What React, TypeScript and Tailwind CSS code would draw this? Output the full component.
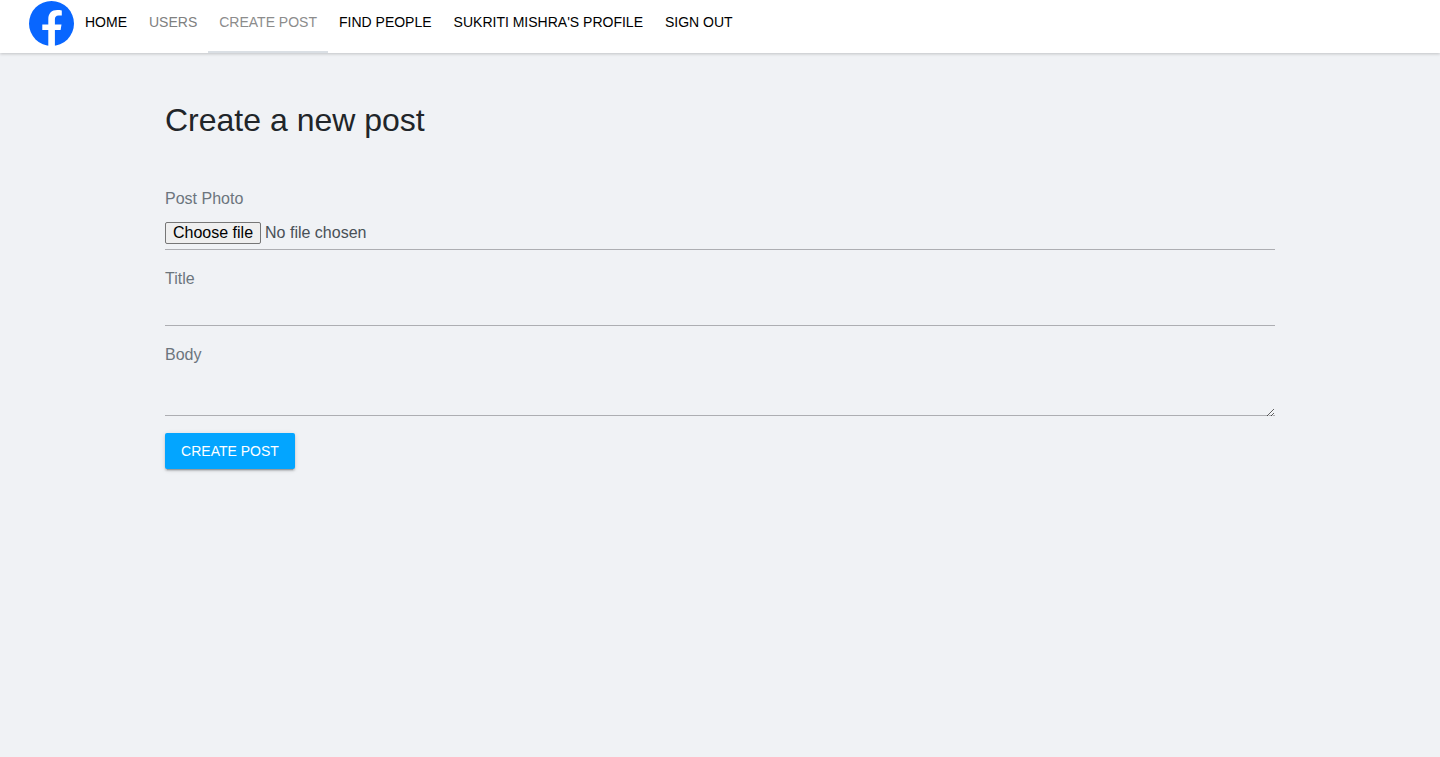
const nav = "flex h-[53px] items-start px-[11px] pt-[13px] text-[14px] leading-[18px]";

export default function App() {
  return (
    <div className="min-h-screen bg-[#f0f2f5] font-['Liberation_Sans',Arial,sans-serif]">
      <header className="flex h-[53px] bg-white pl-[29px] shadow-[0_1px_3px_rgba(0,0,0,0.2)]">
        <svg className="mt-px size-[45px] shrink-0" viewBox="0 0 45 45">
          <circle cx="22.5" cy="22.5" r="22.5" fill="#0866ff" />
          <path fill="#fff" d="M19.3 44.9V29h-6v-5.6h6v-5.2c0-6 3.5-9.2 8.9-9.2 1.7 0 3.2.2 4.6.4v5.1h-3.1c-2.9 0-3.8 1.8-3.8 3.7v5.2h6.6L31.6 29h-5.7v15.9z" />
        </svg>
        <nav className="flex">
          <a className={`${nav} text-black`}>HOME</a>
          <a className={`${nav} text-[#808080]`}>USERS</a>
          <a className={`${nav} border-b-2 border-[#dadfe4] text-[#8c8c8c]`}>CREATE POST</a>
          <a className={`${nav} text-black`}>FIND PEOPLE</a>
          <a className={`${nav} text-black`}>SUKRITI MISHRA'S PROFILE</a>
          <a className={`${nav} text-black`}>SIGN OUT</a>
        </nav>
      </header>
      <main className="mx-auto w-[1110px] pt-12 text-[16px] leading-6 text-[#6c757d]">
        <h2 className="h-[86px] text-[32px] leading-[38px] text-[#212529]">Create a new post</h2>
        <label className="block">Post Photo</label>
        <div className="mt-2 flex h-[31px] items-start gap-1 border-b border-[#adaeb2] pt-[3px] leading-[22px] text-[#495057]">
          <button className="h-[22px] rounded-[2px] border border-[#767676] bg-[#efefef] px-[7px] leading-5 text-black">Choose file</button>
          <span>No file chosen</span>
        </div>
        <label className="mt-[17px] block">Title</label>
        <input className="block h-[35px] w-full border-b border-[#adaeb2] outline-none" />
        <label className="mt-[17px] block">Body</label>
        <textarea className="block h-[50px] w-full resize bg-[linear-gradient(to_top,transparent_1px,#adaeb2_1px,#adaeb2_2px,transparent_2px)] outline-none" />
        <button className="mt-4 block h-9 w-[130px] rounded-[2px] bg-[#03a5ff] text-[14px] text-white shadow-[0_2px_2px_rgba(0,0,0,0.14),0_3px_1px_-2px_rgba(0,0,0,0.2),0_1px_5px_rgba(0,0,0,0.12)]">CREATE POST</button>
      </main>
    </div>
  );
}
